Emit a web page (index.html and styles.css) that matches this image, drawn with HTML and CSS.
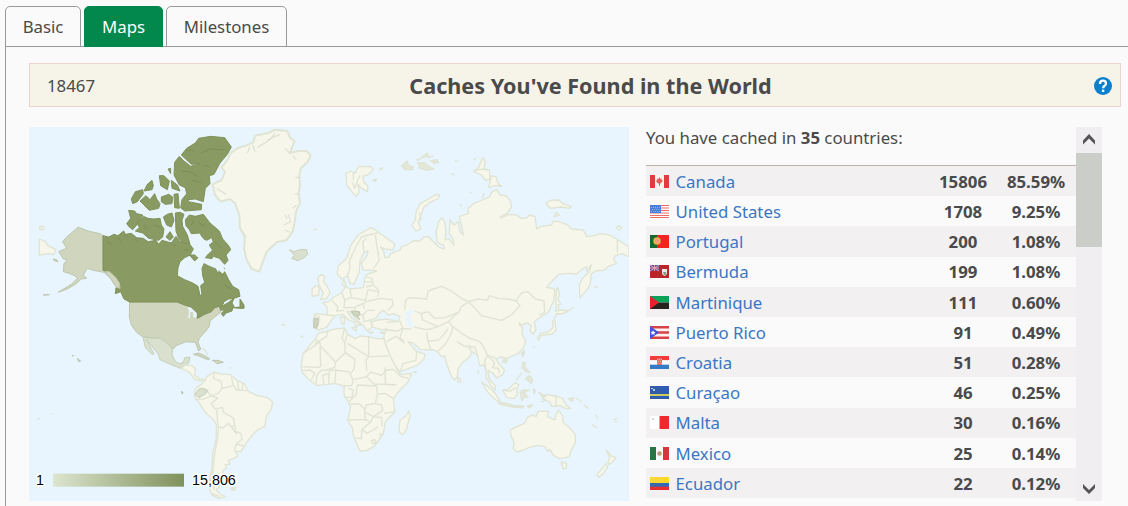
FILE: index.html
```html
<!DOCTYPE html>
<html lang="en">
<head>
<meta charset="utf-8">
<title>Statistics - Maps</title>
<link rel="stylesheet" href="styles.css">
</head>
<body>
<nav class="tabs">
  <a class="tab tab-basic">Basic</a>
  <a class="tab tab-active">Maps</a>
  <a class="tab tab-milestones">Milestones</a>
</nav>
<main class="panel">
  <header class="title-bar">
    <span class="total">18467</span>
    <h1>Caches You've Found in the World</h1>
    <svg class="help" viewBox="0 0 18 18"><circle cx="9" cy="9" r="9" fill="#0b7fcb"/><path d="M6 7.100V6.400Q6 3.700 9 3.700T12 6.400Q12 7.600 10.600 8.700Q9.100 9.800 9.100 11.300" fill="none" stroke="#fff" stroke-width="2.300"/><rect x="7.900" y="12.600" width="2.400" height="2.400" fill="#fff"/></svg>
  </header>
  <div class="content">
    <svg class="map" viewBox="3 6 1800 1122">
      <rect class="sea" x="3" y="6" width="1800" height="1122"/>
      <!-- Eurasia -->
      <path class="land" d="M1016 315L1030 308 1046 318 1068 334 1101 358 1094 375 1070 372 1058 366 1068 380 1070 398 1084 396 1088 386 1116 375 1120 366 1136 360 1156 348 1176 348 1188 336 1200 334 1216 350 1232 366 1248 372 1248 362 1228 352 1224 320 1232 290 1241 278 1250 290 1254 320 1251 345 1262 340 1278 360 1275 342 1264 325 1266 285 1278 300 1291 290 1296 320 1306 330 1300 300 1294 275 1321 265 1321 250 1336 236 1356 228 1386 215 1390 202 1406 193 1416 210 1432 212 1446 225 1451 245 1440 262 1416 278 1426 275 1445 268 1466 270 1480 280 1496 280 1504 270 1521 275 1526 312 1538 304 1571 300 1575 288 1592 290 1616 298 1630 312 1666 315 1676 335 1700 332 1716 326 1745 330 1766 342 1803 366V395L1781 386 1762 392 1756 402 1766 415 1740 425 1726 437 1708 436 1690 446 1686 480 1676 496 1656 518 1654 480 1664 458 1684 440 1690 420 1676 440 1676 425 1660 434 1646 447 1622 445 1591 448 1574 466 1556 487 1576 490 1581 500 1577 528 1561 562 1536 577 1519 590 1524 614 1516 628 1506 618 1510 602 1498 594 1476 602 1474 592 1484 610 1481 626 1493 648 1486 670 1471 685 1436 700 1420 696 1404 702 1412 716 1430 735 1424 749 1406 759 1394 744 1380 736 1382 758 1390 770 1402 782 1402 796 1388 782 1374 755 1374 735 1366 718 1356 724 1348 690 1331 680 1326 695 1306 710 1291 730 1288 755 1279 765 1270 754 1256 716 1250 693 1240 695 1228 680 1216 675 1176 673 1156 655 1140 650 1164 678 1191 688 1188 702 1166 722 1116 740 1100 722 1082 690 1070 650 1067 634 1076 612 1060 614 1036 607 1028 592 1050 585 1076 582 1112 590 1116 575 1096 566 1080 570 1066 556 1052 566 1046 578 1028 586 1032 606 1018 618 1008 604 985 583 966 560 958 560 972 580 998 600 984 602 980 592 962 585 944 568 922 572 907 590 896 607 872 615 858 608 859 568 870 566 898 570 896 544 884 534 902 530 918 516 940 504 952 486 942 478 948 463 955 486 966 492 1006 488 1010 460 1016 448 1046 438 1034 436 1006 435 1000 415 1018 390 1020 378 1008 382 996 408 994 440 978 478 966 475 960 452 942 462 928 448 930 424 956 400 968 362 990 330Z"/>
      <path class="sea" d="M1134 560L1150 552 1158 560 1144 574 1158 600 1150 612 1136 598 1132 580Z"/>
      <path class="border" d="M958 452L966 430 964 410 972 390 984 366 1000 336 1020 330 1050 324M1008 382L1004 350 1016 340M1042 330L1048 370 1054 405 1036 432M1012 455L1032 460 1036 480 1014 486M1010 470L1035 472M966 492L970 518 1012 526 1020 494M970 518L950 525 942 504M950 525L948 548 980 548 1004 536 1020 528 1060 520 1092 524 1096 538 1080 556M1036 480L1052 496 1050 516M1020 494L1050 500M898 570L920 572M912 528L930 545 926 558 948 556M980 548L985 566 1004 570 1018 556 1040 556M1004 570L1008 590 1030 584M985 566L978 574M1004 536L1010 552M1130 555L1132 528 1142 518 1196 522 1200 498 1240 484 1258 492 1270 498 1300 520 1322 530 1350 522 1378 526 1384 512 1410 520 1440 522 1464 528 1480 504 1500 500 1522 522 1548 528 1550 562 1534 570M1322 530L1300 545 1292 562 1276 575 1262 590 1272 602 1300 625 1326 640 1352 648 1364 660 1378 690 1404 700M1322 530L1350 560 1360 572 1420 586 1450 570 1476 542 1464 528M1160 558L1180 566 1200 560 1220 580 1250 578 1292 562M1158 606L1194 614 1206 612 1230 605 1262 590M1180 566L1184 585 1214 598 1230 605M1116 588L1124 610 1150 612M1112 590L1076 592M1124 610L1116 638 1128 650M1196 622L1200 650 1208 672M1200 650L1234 644 1260 612M1228 680L1250 660 1268 630 1276 604M1286 650L1310 664 1330 662M1331 680L1322 668 1340 665 1348 690M1374 735L1370 706 1378 692 1400 712 1394 728 1412 730 1414 745M1076 615L1108 618 1124 610M1076 650L1104 634 1130 655M1116 740L1126 715 1164 706 1166 680M860 572L874 575 870 606"/>
      <path class="found-light" d="M858 580L871 580 870 594 866 610 857 607Z"/>
      <path class="found-light" d="M970 558L994 560 996 570 988 572 995 584 974 566Z"/>
      <!-- Greenland, Iceland and the North Atlantic -->
      <g transform="translate(516 0)">
        <path class="land coast" d="M92 84L115 68 138 62 160 52 165 32 205 24 225 14 262 18 270 38 284 48 275 70 270 84 295 78 320 78 332 92 322 112 302 130 298 155 300 180 296 205 300 235 288 260 285 285 278 320 260 345 230 352 200 380 188 412 178 440 155 432 140 405 132 370 135 335 120 310 118 270 105 235 90 222 62 230 45 210 38 178 65 165 75 140 64 128 82 105Z"/>
        <path class="border" d="M150 65L142 84M165 80L158 60M172 68L210 44 225 25M202 45L240 28M268 84L255 70M278 92L288 104M298 155L286 160M296 205L284 208M290 240L278 250M265 268L272 290 252 300M254 315L270 322M262 280L255 270M125 318L138 335M50 190L78 208"/>
        <path class="found-pale" d="M268 374L282 380 300 374 320 374 323 388 310 400 292 407 274 400 284 392Z"/>
        <path class="land" d="M438 145L452 138 465 145 475 125 510 124 520 133 506 148 488 154 492 172 504 184 502 200 485 190 474 178 478 200 468 215 460 205 440 180ZM538 132L548 128 545 134ZM518 166L530 162 525 169Z"/>
        <path class="border" d="M456 170L464 190 472 168 480 150M460 145V165"/>
        <path class="land" d="M354 456L365 448 375 456 370 466 385 490 390 505 380 520 362 524 370 505 362 490 356 475ZM336 492L350 480 358 488 356 510 336 514Z"/>
        <path class="isles" d="M604 122L622 108 625 122 640 126 638 134 616 134ZM648 104L656 106 664 98 682 84 686 98 700 92M690 108L710 104 716 112 700 116M652 114L672 112 690 126 702 132 680 136 656 128"/>
        <path class="land" d="M421 578L434 576 432 599 426 596ZM455 608L470 606 468 618ZM506 621L520 622 512 625ZM540 623L552 620 546 626ZM342 314L350 312Z"/>
      </g>
      <!-- Arctic islands of Russia and the Pacific coast -->
      <g transform="translate(1116 0)">
        <path class="land" d="M36 300L46 285 48 262 60 236 85 222 108 208 120 210 112 222 90 232 72 246 64 268 55 290 62 312 48 318ZM222 140L235 128 248 98 256 110 252 130 268 136 270 162 256 166 244 150ZM222 103L228 100ZM266 188L274 152 288 155 294 176 306 184 284 182ZM438 234L450 226 476 225 490 236 514 244 508 250 484 246 450 250ZM462 275L468 262 478 270ZM648 308L655 302 665 308 658 315ZM154 146L162 150ZM166 108L172 110ZM180 240L185 242ZM212 204L216 202ZM468 495L474 488 478 510 474 522 482 538 474 540 478 565 468 560ZM584 484L592 488Z"/>
        <path class="border" d="M246 218L250 214 252 204M470 568L500 562 520 546M652 342V384M220 136L252 132 264 136M58 262L64 285"/>
      </g>
      <!-- Africa and South America -->
      <g transform="translate(516 555)">
        <path class="land" d="M345 88L355 70 372 66 400 58 434 54 442 72 466 86 480 78 506 80 530 86 552 86 560 112 574 145 592 180 602 194 635 190 624 216 600 240 580 266 585 305 556 335 550 370 524 408 500 422 480 423 474 412 460 376 458 356 443 330 452 290 432 252 432 228 404 220 378 224 350 226 325 208 306 186 303 168 310 130 328 108Z"/>
        <path class="land" d="M598 350L600 330 618 318 626 303 630 318 618 362 608 374 598 366Z"/>
        <path class="border" d="M345 88L360 96 310 130M360 96L362 170 350 172 306 170M360 106L406 156 436 128 434 100 426 84 434 54M442 100L506 140M434 100L442 72M506 80V140L498 150 500 184M506 140L566 138M384 60L380 80 345 100M406 156L404 172 380 180 362 182 350 196 348 222M436 128L465 148 462 178 450 192 460 212 455 226 432 228M406 180L450 186M404 220L408 180 388 182 386 222M372 222L368 196 388 190M462 208L500 200 512 186 545 196 560 180 580 178 602 200 624 204M500 200L520 222 560 224 590 224M472 225L468 255 446 276M472 225L530 228 532 252 526 280 498 285 494 305 496 328 443 330M452 282L478 282 494 298M532 252L556 250 580 266M526 280L545 285 548 302 520 320 498 308M552 310L585 305M496 328L512 336 486 358 484 386 462 384M486 358L500 370 520 360 534 350M512 336L520 320 545 322 546 348M306 182L330 180 344 190 334 210M538 370L545 374 540 382M515 392L524 388 528 398 520 402ZM446 235L460 240 456 262 434 262M555 172L556 222 582 226"/>
        <path class="land" d="M14 214L20 200 42 186 62 192 92 194 112 212 134 222 145 245 170 256 200 262 218 275 214 298 200 316 194 350 172 360 156 376 134 406 124 424 106 424 114 438 100 446 86 450 90 462 76 464 80 474 68 484 70 500 60 510 58 532 48 540 60 552 76 560 58 566 38 556 28 536 28 508 36 480 38 430 48 390 50 345 40 328 20 312 -2 280 -17 258 -14 236 0 226Z"/>
        <path class="border" d="M42 186L40 205 64 214 66 236 54 250 34 258M66 236L100 226 94 200M100 226L110 240 140 242M112 212L116 238M128 220L126 240M14 234L34 258 54 264M-15 268L8 268 34 258M54 264L34 280 46 298 66 292 72 308 100 324 104 344 94 352 86 340 68 354 56 350 52 390 44 430 38 490 42 540M54 350L50 300M104 344L106 364 122 370 126 388 108 402 104 422M86 340L110 372M108 402L132 408M34 550L60 560M34 480L32 530"/>
        <path class="found-pale" d="M-3 237L7 235 23 242 17 251 -3 263 -15 253Z"/>
        <path class="land coast" d="M94 535L106 533 104 539 96 540ZM248 44L252 46ZM304 79L307 80ZM642 186L648 187Z"/>
      </g>
      <!-- United States, Mexico, Central America and the Caribbean -->
      <path class="land" d="M36 304L48 305 44 315 34 312ZM34 342L52 350 60 362 84 374 76 388 62 386 46 388 34 390Z"/>
      <path class="found-light" d="M225 332V436L246 448 266 470 274 490 262 482 246 458 228 442 196 436 178 430 166 450 176 460 160 462 142 478 118 492 90 502 110 490 130 478 148 460 140 452 120 444 106 440 108 416 118 404 106 402 92 380 116 370 104 350 116 336 144 312 150 306 180 318 216 326ZM75 402L86 404 90 410 80 408ZM46 510L64 509Z"/>
      <path class="found-light" d="M305 531H448L462 538 480 543 494 546 502 578 512 578 530 568 550 560 566 546 576 544 578 562 560 576 546 588 544 604 536 615 514 640 510 652 518 672 512 678 502 652 474 650 444 662 436 672 420 658 396 640 345 636 326 622 310 600 304 576Z"/>
      <path class="sea" d="M478 545L490 550 506 565 504 579 496 576 495 560 486 562 486 580 481 580 483 558Z"/>
      <path class="found-pale" d="M345 636L370 640 396 640 408 648 424 660 434 674 432 690 442 710 455 716 466 712 470 698 486 696 482 714 468 722 458 730 432 720 396 704 390 686 370 662 354 642 378 686 374 690 352 668Z"/>
      <path class="land" d="M460 730L472 720 492 722 502 730 500 750 512 760 530 764 520 768 500 762 484 742Z"/>
      <path class="found-light" d="M496 688L512 684 530 692 546 702 536 703 516 694ZM552 706L570 706 586 712 566 716 558 708ZM132 692L138 692ZM148 700L158 708 152 710ZM460 798L466 804 462 807Z"/>
      <path class="border" d="M522 670L530 674 540 690M28 882L36 880M70 866L74 867M602 728L610 730"/>
      <!-- Canadian mainland -->
      <path class="found" d="M225 332L242 336 258 328 270 332 287 318 292 328 310 325 326 338 346 340 360 350 384 346 392 358 402 346 430 354 444 334 456 350 474 350 484 356 496 372 486 390 470 398 456 410 450 428 448 452 470 464 494 474 510 484 516 512 522 508 518 482 530 472 524 452 522 430 530 412 546 416 560 426 568 442 590 440 602 464 614 484 632 494 636 514 618 520 602 522 588 530 582 544 602 532 618 520 612 534 620 548 636 546 636 522 648 540 648 550 634 550 614 548 612 558 594 564 586 574 580 566 590 554 578 556 574 544 560 548 550 560 530 568 508 580 508 564 490 546 470 540 448 531H305L288 522 278 500 262 506 264 488 274 486 258 462 236 440 225 436Z"/>
      <path class="found-light" d="M232 440L244 440 262 456 274 474 276 490 264 486 252 466Z"/>
      <!-- Canadian Arctic archipelago -->
      <g class="found">
        <path d="M460 90L476 70 502 54 512 40 548 34 590 38 610 66 598 88 576 114 558 148 544 152 546 176 532 190 526 230 502 222 480 224 482 230 521 238 520 254 470 258 458 248 462 224 476 206 472 188 454 180 438 150 440 112 454 94 468 108 488 124 516 116 490 118Z"/>
        <path d="M394 152L408 152 424 168 418 194 398 182ZM420 132L428 130 428 146ZM430 166L448 180 456 198 432 190ZM358 178L372 166 376 182 372 194 348 198ZM310 222L322 200 344 194 346 206 328 230 314 236ZM336 228L354 212 366 224 380 206 386 222 396 236 392 250 364 256ZM400 216L422 208 434 216 432 236 412 238 400 230ZM438 208L450 206 454 250 440 248Z"/>
        <path d="M302 256L320 258 326 266 344 270 332 286 326 300 314 314 304 306 296 296 308 280ZM326 292L346 274 360 280 378 282 396 280 400 300 408 312 404 336 392 346 362 340 344 324 322 318 334 308ZM406 276L418 268 432 264 438 286 430 306 416 300ZM442 264L456 262 468 268 462 286 464 304 478 330 486 358 466 354 452 340 444 318ZM414 336L426 320 436 336 426 346ZM472 284L484 270 502 274 526 268 546 294 574 318 584 342 602 362 608 374 594 390 600 406 590 418 574 400 556 394 548 406 530 402 548 374 542 352 552 344 536 346 524 340 516 324 490 326 484 314 474 302ZM484 390L500 390 510 398 500 408ZM516 384L526 382 528 396ZM572 426L590 430 586 452 574 442Z"/>
      </g>
      <path class="sea" d="M522 336L528 346 522 356 550 340 554 350 542 360 552 376 528 398 504 394 514 374 506 360 508 334ZM524 398L560 404 580 416 592 436 584 446 568 432 544 422 520 410Z"/>
      <path class="relief" d="M476 78L490 74 500 80M520 84L548 72 590 74M462 138L492 142 508 156M490 166L520 172M530 120L544 128M380 300L394 306M490 284L498 292 488 300M512 292L530 304M430 358L444 362M320 342L330 352M468 374L484 376M350 300L354 314M560 350L580 370M590 480L610 492M236 350L250 356M270 338L280 352"/>
      <!-- South-east Asia and Oceania -->
      <g transform="translate(1116 555)">
        <path class="land" d="M331 360L350 350 374 340 382 322 400 314 408 320 414 304 446 304 442 320 464 330 470 310 476 300 488 318 490 338 508 352 526 374 526 398 512 424 508 440 480 446 460 436 450 418 442 424 436 410 414 406 388 412 370 420 350 426 340 416 342 396 332 376ZM484 456L500 460 498 474 490 478Z"/>
        <path class="land" d="M618 420L628 430 634 438 648 442 638 456 626 464 624 454 630 444ZM618 460L622 472 612 488 598 502 590 494 606 476ZM440 254L468 258 488 266 498 284 512 296 498 296 478 286 456 290 450 276 428 266ZM244 216L260 226 284 248 300 272 290 272 266 250ZM308 240L322 240 346 218 356 224 350 240 352 254 342 266 320 262ZM172 204L180 206 182 216 174 216Z"/>
        <path class="isles" d="M294 276L320 280 340 286 370 288 368 294 330 290 298 282ZM360 250L366 240 388 240 372 248 384 262 374 262 366 272ZM382 288L398 284 388 294ZM400 236L406 242 402 252ZM416 246L428 254 440 256 428 262ZM424 276L440 270M368 158L376 158 374 170 390 188 376 184 366 174ZM376 206L388 196 398 208 394 220ZM348 212L366 188M310 148L322 150 318 160 308 156ZM372 122L374 128 368 140 364 130ZM234 180L236 190M506 266L522 262 516 274ZM528 264L546 276M552 284L566 296M640 330L652 324M644 336L650 334M576 344L592 354M586 314L594 326"/>
        <path class="land" d="M462 28L470 10 486 12 504 2 484 0 464 4M464 28L468 60 456 72 424 76 416 90 412 84 422 70 444 66 460 52 458 34Z"/>
        <path class="border" d="M468 256V292M312 240L330 244 348 232M400 108L404 112"/>
      </g>
      <defs><linearGradient id="scale"><stop stop-color="#dce5cf"/><stop offset="1" stop-color="#7f915b"/></linearGradient></defs>
      <rect x="75" y="1046" width="393" height="39" fill="url(#scale)"/>
      <g class="legend"><text x="24" y="1080">1</text><text x="492" y="1080">15,806</text></g>
    </svg>
    <section class="countries">
      <div class="list">
        <p class="intro">You have cached in <b>35</b> countries:</p>
        <table>
          <tr><td class="flag"><svg viewBox="0 0 19 13"><path fill="#e23b3f" d="M0 0h19v13H0z"/><path fill="#fff2f0" d="M5 0h9v13H5z"/><path fill="#f0575b" d="M9.500 2l1 2 1.300-.6-.2 2 1.700 0-2.800 3.200H10V11H9V8.600H8L5.500 5.400l1.700 0-.2-2L8.500 4z"/></svg></td><td class="name">Canada</td><td class="num">15806</td><td class="pct">85.59%</td></tr>
          <tr><td class="flag"><svg viewBox="0 0 19 13"><path fill="#fff" d="M0 0h19v13H0z"/><path stroke="#ef6b65" d="M0 .5h19M0 3h19M0 5.500h19M0 8h19M0 10.500h19M0 12.500h19"/><path fill="#4b7edb" d="M0 0h11v8H0z"/><path stroke="#8db0f5" stroke-dasharray="1 1" d="M1 2.500h9M2 4.500h8M1 6.500h9"/></svg></td><td class="name">United States</td><td class="num">1708</td><td class="pct">9.25%</td></tr>
          <tr><td class="flag"><svg viewBox="0 0 19 13"><path fill="#f02523" d="M0 0h19v13H0z"/><path fill="#18672c" d="M0 0h7v13H0z"/><circle cx="7" cy="6" r="3" fill="#ef9a84" stroke="#e5b44c" stroke-width="1.500"/></svg></td><td class="name">Portugal</td><td class="num">200</td><td class="pct">1.08%</td></tr>
          <tr><td class="flag"><svg viewBox="0 0 19 13"><path fill="#b92629" d="M0 0h19v13H0z"/><path fill="#5c5898" d="M0 0h9v6H0z"/><path stroke="#e7a2b1" d="M0 0l9 6M9 0L0 6M0 3h9M4.500 0v6"/><path fill="#e4e9e4" d="M12 4h5v4q0 2-2.500 3Q12 10 12 8z"/><path fill="#69a582" d="M13 7h3v2l-1 1h-1z"/></svg></td><td class="name">Bermuda</td><td class="num">199</td><td class="pct">1.08%</td></tr>
          <tr><td class="flag"><svg viewBox="0 0 19 13"><path fill="#08a358" d="M0 0h19v6.500H0z"/><path fill="#27221f" d="M0 6.500h19V13H0z"/><path fill="#ed202a" d="M0 0l9 6.500L0 13z"/></svg></td><td class="name">Martinique</td><td class="num">111</td><td class="pct">0.60%</td></tr>
          <tr><td class="flag"><svg viewBox="0 0 19 13"><path fill="#fff2f0" d="M0 0h19v13H0z"/><path stroke="#d74447" stroke-width="2.600" d="M0 1.300h19M0 6.500h19M0 11.700h19"/><path fill="#4050e5" d="M0 0l9 6.500L0 13z"/><path fill="#fff" d="M3 4l.7 1.700 2 .2-1.500 1.300.5 1.800L3 8 1.300 9l.4-2L.5 6l1.800-.3z"/></svg></td><td class="name">Puerto Rico</td><td class="num">91</td><td class="pct">0.49%</td></tr>
          <tr><td class="flag"><svg viewBox="0 0 19 13"><path fill="#ef3e38" d="M0 0h19v4.300H0z"/><path fill="#f8f8ff" d="M0 4.300h19v4.400H0z"/><path fill="#347bc5" d="M0 8.700h19V13H0z"/><path fill="#e36965" d="M7 2h5v7H7z"/><path stroke="#f4b0a8" stroke-dasharray="1 1" d="M7 3.500h5M8 5.500h4M7 7.500h5"/></svg></td><td class="name">Croatia</td><td class="num">51</td><td class="pct">0.28%</td></tr>
          <tr><td class="flag"><svg viewBox="0 0 19 13"><path fill="#315cae" d="M0 0h19v13H0z"/><path fill="#d0cb60" d="M0 8h19v2H0z"/><path fill="#b8ccf0" d="M1 2h2v1H1zM3 3h2v2H3z"/></svg></td><td class="name">Curaçao</td><td class="num">46</td><td class="pct">0.25%</td></tr>
          <tr><td class="flag"><svg viewBox="0 0 19 13"><path fill="#fff" d="M0 0h19v13H0z"/><path fill="#ef292d" d="M9.500 0H19v13H9.500z"/><path fill="#d3dcd0" d="M2 2h2v2H2z"/></svg></td><td class="name">Malta</td><td class="num">30</td><td class="pct">0.16%</td></tr>
          <tr><td class="flag"><svg viewBox="0 0 19 13"><path fill="#fafafa" d="M0 0h19v13H0z"/><path fill="#267746" d="M0 0h6v13H0z"/><path fill="#d4363b" d="M13 0h6v13h-6z"/><circle cx="9.500" cy="6.500" r="2.300" fill="#b69c76"/></svg></td><td class="name">Mexico</td><td class="num">25</td><td class="pct">0.14%</td></tr>
          <tr><td class="flag"><svg viewBox="0 0 19 13"><path fill="#f8d831" d="M0 0h19v6.500H0z"/><path fill="#3569af" d="M0 6h19v4H0z"/><path fill="#e82e31" d="M0 9.700h19V13H0z"/></svg></td><td class="name">Ecuador</td><td class="num">22</td><td class="pct">0.12%</td></tr>
        </table>
      </div>
      <div class="scrollbar">
        <svg class="arrow" viewBox="0 0 26 26"><path d="M7 13.500L13 7 19 13.500V17.500L13 11.500 7 17.500Z" fill="#555"/></svg>
        <div class="thumb"></div>
        <svg class="arrow arrow-down" viewBox="0 0 26 26"><path d="M7 9L13 15 19 9V13L13 19 7 13Z" fill="#555"/></svg>
      </div>
    </section>
  </div>
</main>
</body>
</html>
```
FILE: styles.css
```css
* { box-sizing: border-box; }
body {
  margin: 0;
  height: 506px;
  padding: 6px 0 0 5px;
  overflow: hidden;
  background: #fafafa;
  color: #4a4a4a;
  font-family: "Noto Sans", sans-serif;
  font-size: 16.8px;
}
.tabs { display: flex; gap: 3px; height: 41px; box-shadow: inset 0 -1px #999; }
.tab {
  height: 41px;
  border: 1px solid #999;
  border-radius: 5px 5px 0 0;
  text-align: center;
  line-height: 40px;
}
.tab-basic { width: 76px; }
.tab-active { width: 79px; background: #02874d; border-color: #02874d; color: #fff; }
.tab-milestones { width: 121px; }
.panel { height: 459px; border-left: 1px solid #999; padding: 16px 7px 0 23px; }
.title-bar {
  display: grid;
  grid-template-columns: 120px 1fr 98px;
  align-items: center;
  height: 44px;
  padding: 0 8px 0 17px;
  background: #f6f4e8;
  border: 1px solid #ead4d0;
}
.title-bar h1 { margin: 0; padding-top: 1px; text-align: center; font-size: 21.6px; line-height: 42px; }
.help { width: 18px; height: 18px; justify-self: end; }
.content { display: flex; gap: 17px; margin-top: 20px; }
.map { width: 600px; height: 374px; flex: none; }
.sea { fill: #e8f5fe; }
.land { fill: #f6f6ea; stroke: #dfe4d3; stroke-width: 4; stroke-linejoin: round; }
.coast { stroke-width: 6; }
.border { fill: none; stroke: #dfe4d3; stroke-width: 4; stroke-linejoin: round; }
.isles { fill: #e3e7d7; stroke: #dfe4d3; stroke-width: 4; stroke-linejoin: round; }
.found { fill: #899b62; stroke: #809259; stroke-width: 3; stroke-linejoin: round; }
.found-light { fill: #d0d6bd; stroke: #bdc6ad; stroke-width: 3; stroke-linejoin: round; }
.found-pale { fill: #d9e1ce; stroke: #c6cfba; stroke-width: 3; stroke-linejoin: round; }
.relief { fill: none; stroke: #7b8d55; stroke-width: 3; }
.legend {
  font: 43px "Liberation Sans", sans-serif;
  fill: #000;
  stroke: #fff;
  stroke-width: 9px;
  stroke-linejoin: round;
  paint-order: stroke;
}
.countries { display: flex; width: 456px; height: 374px; }
.list { width: 430px; }
.intro { margin: 0; height: 38px; line-height: 22px; }
.list table {
  width: 430px;
  border-collapse: separate;
  border-spacing: 0;
  border-top: 1px solid #bfb0aa;
  table-layout: fixed;
}
.list td { height: 30.2px; padding: 0.6px 0 0; line-height: 29px; }
.list tr:nth-child(odd) { background: #f2f0f1; }
.flag { width: 29.5px; }
.flag svg { display: block; width: 19px; height: 13px; margin-left: 4px; }
.name { width: 248.5px; color: #3b76c4; }
.num { width: 78px; text-align: center; font-weight: bold; }
.list .pct { width: 74px; text-align: center; font-weight: bold; padding-right: 6px; }
.scrollbar { display: flex; flex-direction: column; width: 26px; height: 374px; background: #f0eef0; }
.arrow { width: 26px; height: 26px; }
.thumb { height: 94px; background: #cacdc8; }
.arrow-down { margin-top: auto; }
```
